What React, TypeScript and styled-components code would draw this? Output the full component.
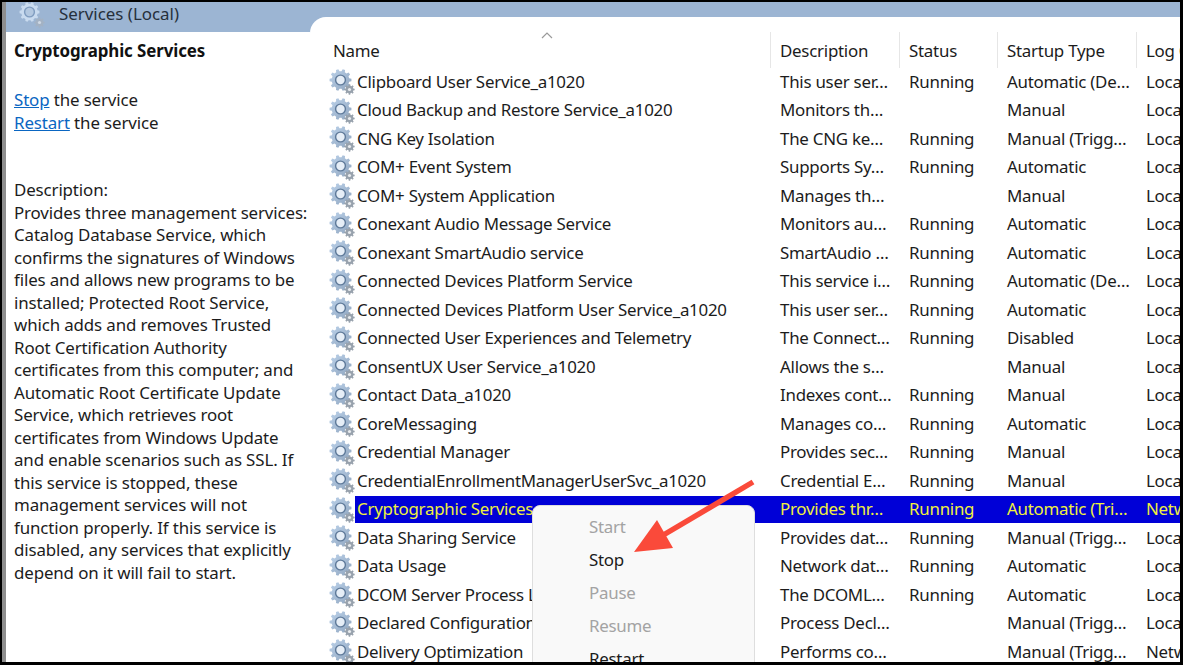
import React from "react";
import styled, { createGlobalStyle } from "styled-components";

const GlobalStyle = createGlobalStyle`
  html, body {
    margin: 0;
    padding: 0;
    background: #000;
    overflow: hidden;
  }
`;

const Frame = styled.div`
  width: 1183px;
  height: 665px;
  box-sizing: border-box;
  padding: 2px 3px 3px 2px;
  background: #000;
  font-family: "Noto Sans", "Open Sans", sans-serif;
  font-size: 16.9px;
  letter-spacing: -0.25px;
  color: #1c1c1c;
`;

const Shell = styled.div`
  display: flex;
  height: 100%;
  box-sizing: border-box;
  border-left: 4px solid #8e8e8e;
  background: #9cb5d3;
  overflow: hidden;
`;

const SidePane = styled.aside`
  width: 304px;
  flex: none;
  display: flex;
  flex-direction: column;
`;

const TitleBar = styled.div`
  height: 30px;
  flex: none;
  display: flex;
  align-items: center;
  gap: 14px;
  padding: 0 0 8px 13px;
  box-sizing: border-box;
  letter-spacing: 0;
  color: #26303c;
`;

const SideBody = styled.div`
  flex: 1;
  background: #fff;
  padding: 8px 0 0 8px;
  line-height: 22.5px;
  letter-spacing: -0.13px;
  white-space: nowrap;
`;

const Heading = styled.div`
  font-weight: 700;
  letter-spacing: -0.1px;
  height: 49px;
  color: #111;
`;

const ActionLine = styled.div``;

const ActionLink = styled.a`
  color: #0a66c2;
  text-decoration: underline;
`;

const Description = styled.div`
  margin-top: 45px;
`;

const ListPane = styled.main`
  flex: 1;
  position: relative;
  margin-top: 15px;
  padding-left: 19px;
  background: #fff;
  border-top-left-radius: 16px;
  overflow: hidden;
  white-space: nowrap;
`;

const HeaderRow = styled.div`
  display: grid;
  grid-template-columns: 441px 129px 98px 139px 1fr;
  height: 51px;
  box-sizing: border-box;
  padding-top: 15px;
  position: relative;
`;

const HeaderCell = styled.div<{ $first?: boolean }>`
  padding-left: ${(p) => (p.$first ? "4px" : "9px")};
  line-height: 38px;
  height: 36px;
  border-left: ${(p) => (p.$first ? "none" : "1px solid #e6e6e6")};
  overflow: hidden;
`;

const SortCaret = styled.svg`
  position: absolute;
  left: 212px;
  top: 15px;
`;

const Row = styled.div`
  display: flex;
  height: 28.5px;
  align-items: center;
`;

const RowCells = styled.div<{ $selected?: boolean }>`
  flex: 1;
  display: grid;
  grid-template-columns: 415px 129px 98px 139px 1fr;
  height: 27px;
  line-height: 25px;
  background: ${(p) => (p.$selected ? "#0000d7" : "transparent")};
  color: ${(p) => (p.$selected ? "#f0f03c" : "inherit")};
`;

const NameCell = styled.div`
  padding-left: 2px;
  overflow: hidden;
`;

const Cell = styled.div`
  padding-left: 10px;
  overflow: hidden;
`;

const Menu = styled.div`
  position: absolute;
  left: 222px;
  top: 488px;
  width: 223px;
  height: 190px;
  box-sizing: border-box;
  padding: 4px 0 0 56px;
  background: #f9f9f9;
  border: 1px solid #dedede;
  border-radius: 8px;
`;

const MenuItem = styled.div<{ $disabled?: boolean }>`
  height: 33px;
  line-height: 33px;
  color: ${(p) => (p.$disabled ? "#a3a3a3" : "#1c1c1c")};
`;

const Arrow = styled.svg`
  position: absolute;
  left: 310px;
  top: 460px;
`;

const RowGear = styled.svg`
  flex: none;
`;

const TitleGear = styled.svg`
  flex: none;
  margin-top: 4px;
`;

function gearPath(cx: number, cy: number, outer: number, inner: number, teeth: number) {
  const step = (Math.PI * 2) / teeth;
  const pts: string[] = [];
  for (let i = 0; i < teeth; i++) {
    const a = i * step;
    const corners: [number, number][] = [
      [inner, a - step * 0.32],
      [outer, a - step * 0.18],
      [outer, a + step * 0.18],
      [inner, a + step * 0.32],
    ];
    corners.forEach(([r, t]) => {
      pts.push(`${(cx + r * Math.cos(t)).toFixed(2)} ${(cy + r * Math.sin(t)).toFixed(2)}`);
    });
  }
  return `M${pts.join("L")}Z`;
}

const bigGear = gearPath(11.5, 11, 11, 8.8, 10);
const paleGear = gearPath(10.5, 10, 10, 8.2, 10);
const smallGear = gearPath(20.5, 20.5, 5.2, 3.9, 8);

const GearIcon = () => (
  <RowGear width="26" height="26" viewBox="0 0 26 26">
    <defs>
      <linearGradient id="gearFill" x1="0" y1="0" x2="1" y2="1">
        <stop offset="0" stopColor="#bcd2ea" />
        <stop offset="1" stopColor="#8fa5bf" />
      </linearGradient>
    </defs>
    <path d={bigGear} fill="url(#gearFill)" />
    <circle cx="11.5" cy="11" r="5.6" fill="#5f7a9a" />
    <circle cx="11.5" cy="11" r="4.2" fill="#e6eef7" />
    <path d={smallGear} fill="#98a2ad" />
    <circle cx="20.5" cy="20.5" r="1.6" fill="#e9ecef" />
  </RowGear>
);

const PaleGearIcon = () => (
  <TitleGear width="26" height="26" viewBox="0 0 26 26">
    <path d={paleGear} fill="#c9dbef" />
    <circle cx="10.5" cy="10" r="5.6" fill="#7f9cbf" />
    <circle cx="10.5" cy="10" r="4.2" fill="#b3c8e0" />
    <path d={smallGear} fill="#a3b2c4" />
    <circle cx="20.5" cy="20.5" r="1.6" fill="#cfd9e5" />
  </TitleGear>
);

const services: [string, string, string, string, string][] = [
  ["Clipboard User Service_a1020", "This user ser…", "Running", "Automatic (De…", "Local Service"],
  ["Cloud Backup and Restore Service_a1020", "Monitors th…", "", "Manual", "Local Service"],
  ["CNG Key Isolation", "The CNG ke…", "Running", "Manual (Trigg…", "Local System"],
  ["COM+ Event System", "Supports Sy…", "Running", "Automatic", "Local Service"],
  ["COM+ System Application", "Manages th…", "", "Manual", "Local System"],
  ["Conexant Audio Message Service", "Monitors au…", "Running", "Automatic", "Local System"],
  ["Conexant SmartAudio service", "SmartAudio …", "Running", "Automatic", "Local System"],
  ["Connected Devices Platform Service", "This service i…", "Running", "Automatic (De…", "Local Service"],
  ["Connected Devices Platform User Service_a1020", "This user ser…", "Running", "Automatic", "Local System"],
  ["Connected User Experiences and Telemetry", "The Connect…", "Running", "Disabled", "Local System"],
  ["ConsentUX User Service_a1020", "Allows the s…", "", "Manual", "Local System"],
  ["Contact Data_a1020", "Indexes cont…", "Running", "Manual", "Local System"],
  ["CoreMessaging", "Manages co…", "Running", "Automatic", "Local Service"],
  ["Credential Manager", "Provides sec…", "Running", "Manual", "Local System"],
  ["CredentialEnrollmentManagerUserSvc_a1020", "Credential E…", "Running", "Manual", "Local System"],
  ["Cryptographic Services", "Provides thr…", "Running", "Automatic (Tri…", "Network Service"],
  ["Data Sharing Service", "Provides dat…", "Running", "Manual (Trigg…", "Local System"],
  ["Data Usage", "Network dat…", "Running", "Automatic", "Local Service"],
  ["DCOM Server Process Launcher", "The DCOML…", "Running", "Automatic", "Local System"],
  ["Declared Configuration", "Process Decl…", "", "Manual (Trigg…", "Local System"],
  ["Delivery Optimization", "Performs co…", "", "Manual (Trigg…", "Network Service"],
];

const descriptionLines = [
  "Description:",
  "Provides three management services:",
  "Catalog Database Service, which",
  "confirms the signatures of Windows",
  "files and allows new programs to be",
  "installed; Protected Root Service,",
  "which adds and removes Trusted",
  "Root Certification Authority",
  "certificates from this computer; and",
  "Automatic Root Certificate Update",
  "Service, which retrieves root",
  "certificates from Windows Update",
  "and enable scenarios such as SSL. If",
  "this service is stopped, these",
  "management services will not",
  "function properly. If this service is",
  "disabled, any services that explicitly",
  "depend on it will fail to start.",
];

const menuItems = [
  { label: "Start", disabled: true },
  { label: "Stop", disabled: false },
  { label: "Pause", disabled: true },
  { label: "Resume", disabled: true },
  { label: "Restart", disabled: false },
];

const App: React.FunctionComponent = () => (
  <>
    <GlobalStyle />
    <Frame>
      <Shell>
        <SidePane>
          <TitleBar>
            <PaleGearIcon />
            Services (Local)
          </TitleBar>
          <SideBody>
            <Heading>Cryptographic Services</Heading>
            <ActionLine>
              <ActionLink>Stop</ActionLink> the service
            </ActionLine>
            <ActionLine>
              <ActionLink>Restart</ActionLink> the service
            </ActionLine>
            <Description>
              {descriptionLines.map((line) => (
                <div key={line}>{line}</div>
              ))}
            </Description>
          </SideBody>
        </SidePane>
        <ListPane>
          <HeaderRow>
            <SortCaret width="12" height="7" viewBox="0 0 12 7">
              <path d="M1 6l5-5 5 5" fill="none" stroke="#9a9a9a" strokeWidth="1.2" />
            </SortCaret>
            <HeaderCell $first>Name</HeaderCell>
            <HeaderCell>Description</HeaderCell>
            <HeaderCell>Status</HeaderCell>
            <HeaderCell>Startup Type</HeaderCell>
            <HeaderCell>Log On As</HeaderCell>
          </HeaderRow>
          {services.map(([name, description, status, startup, logon]) => (
            <Row key={name}>
              <GearIcon />
              <RowCells $selected={name === "Cryptographic Services"}>
                <NameCell>{name}</NameCell>
                <Cell>{description}</Cell>
                <Cell>{status}</Cell>
                <Cell>{startup}</Cell>
                <Cell>{logon}</Cell>
              </RowCells>
            </Row>
          ))}
          <Menu>
            {menuItems.map((item) => (
              <MenuItem key={item.label} $disabled={item.disabled}>
                {item.label}
              </MenuItem>
            ))}
          </Menu>
          <Arrow width="140" height="80" viewBox="0 0 140 80">
            <path d="M133 5L40 60" stroke="#fa4a3a" strokeWidth="5.5" fill="none" />
            <path d="M14 75L37 43L53 71Z" fill="#fa4a3a" />
          </Arrow>
        </ListPane>
      </Shell>
    </Frame>
  </>
);

export default App;
